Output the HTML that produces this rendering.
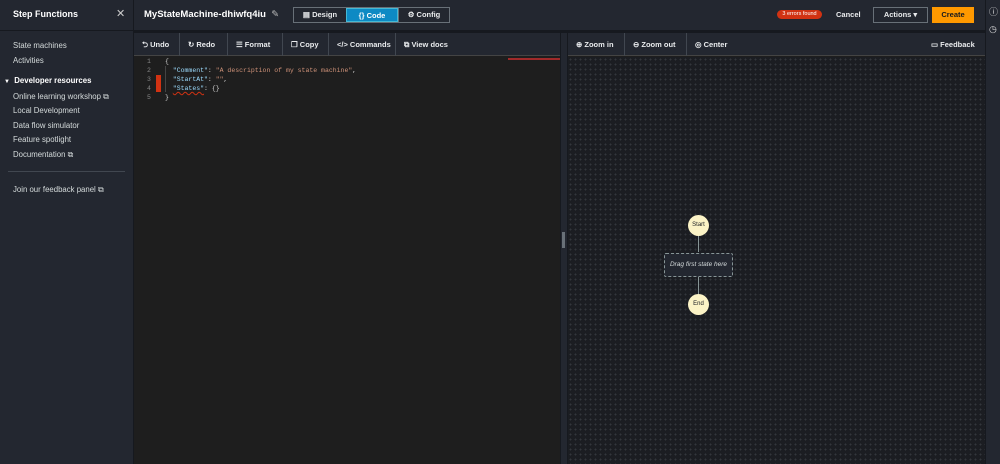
<!DOCTYPE html><html><head><style>
*{box-sizing:border-box;margin:0;padding:0}
body{width:1000px;height:464px;background:#1e1e1e;font-family:"Liberation Sans",sans-serif;color:#d5dbdb;position:relative;overflow:hidden;font-size:7.5px}
.abs{position:absolute}
#side{left:0;top:0;width:134px;height:464px;background:#232730;border-right:1px solid #16191f}
#side .it{position:absolute;left:13px;font-size:7.8px;color:#d5dbdb}
#top{left:134px;top:0;width:851px;height:30px;background:#232730}
#tb{left:134px;top:33px;width:426px;height:23px;background:#232730;border-bottom:1px solid #444}
#tb2{left:568px;top:33px;width:417px;height:23px;background:#232730;border-bottom:1px solid #444}
.btn{position:absolute;top:0;height:23px;line-height:23px;font-weight:bold;font-size:7.5px;color:#e9ebed;border-right:1px solid #414750;padding-left:8px}
#graph{left:568px;top:57px;width:417px;height:407px;background-color:#1b1d22;background-image:radial-gradient(#33363c 0.8px,transparent 1px);background-size:5px 5px}
#rail{left:985px;top:0;width:15px;height:464px;background:#232730;border-left:1px solid #16191f}
.code{font-family:"Liberation Mono",monospace;font-size:6.5px;position:absolute;white-space:pre}
.k{color:#9cdcfe}.s{color:#ce9178}
</style></head><body>
<div id="side" class="abs">
<div style="position:absolute;left:13px;top:9px;font-size:9px;font-weight:bold;color:#fff">Step Functions</div>
<div style="position:absolute;left:116px;top:7px;font-size:11px;color:#ccc">✕</div>
<div style="position:absolute;left:0;top:30px;width:134px;border-top:1px solid #16191f"></div>
<div class="it" style="top:41px">State machines</div>
<div class="it" style="top:56px">Activities</div>
<div class="it" style="top:76px;left:4px;font-weight:bold;color:#fff"><span style="font-size:6px">▼</span>&nbsp; Developer resources</div>
<div class="it" style="top:92px">Online learning workshop ⧉</div>
<div class="it" style="top:106px">Local Development</div>
<div class="it" style="top:121px">Data flow simulator</div>
<div class="it" style="top:135px">Feature spotlight</div>
<div class="it" style="top:150px">Documentation ⧉</div>
<div style="position:absolute;left:8px;top:171px;width:117px;border-top:1px solid #414750"></div>
<div class="it" style="top:185px">Join our feedback panel ⧉</div>
</div>
<div id="top" class="abs">
<div style="position:absolute;left:10px;top:9px;font-size:9.5px;font-weight:bold;color:#fff">MyStateMachine-dhiwfq4iu &nbsp;<span style="font-weight:normal;color:#bbb">✎</span></div>
<div style="position:absolute;left:159px;top:7px;width:157px;height:16px;border:1px solid #687078;display:flex;font-size:7.5px;font-weight:bold;color:#e9ebed">
<div style="width:52px;text-align:center;line-height:14px">▤ Design</div>
<div style="width:52px;text-align:center;line-height:14px;background:#0d8ac4;border:1px solid #44b9d6;color:#fff">{} Code</div>
<div style="flex:1;text-align:center;line-height:14px;border-left:1px solid #687078">⚙ Config</div></div>
<div style="position:absolute;left:643px;top:10px;width:45px;height:9px;border-radius:5px;background:#d13212;color:#fff;font-size:5.5px;text-align:center;line-height:9px">3 errors found</div>
<div style="position:absolute;left:702px;top:10px;font-weight:bold;color:#e9ebed">Cancel</div>
<div style="position:absolute;left:739px;top:7px;width:55px;height:16px;border:1px solid #687078;text-align:center;line-height:14px;font-weight:bold;color:#e9ebed">Actions ▾</div>
<div style="position:absolute;left:798px;top:7px;width:42px;height:16px;background:#ff9900;text-align:center;line-height:16px;font-weight:bold;color:#16191f">Create</div>
</div>
<div id="rail" class="abs"><div style="position:absolute;left:3px;top:5px;color:#ddd;font-size:9px">ⓘ</div><div style="position:absolute;left:3px;top:24px;color:#ddd;font-size:9px">◷</div></div>
<div id="tb" class="abs">
<div class="btn" style="left:0;width:46px">⮌ Undo</div>
<div class="btn" style="left:46px;width:48px">↻ Redo</div>
<div class="btn" style="left:94px;width:55px">☰ Format</div>
<div class="btn" style="left:149px;width:46px">❐ Copy</div>
<div class="btn" style="left:195px;width:67px">&lt;/&gt; Commands</div>
<div class="btn" style="left:262px;width:62px;border:none">⧉ View docs</div>
</div>
<div class="abs" style="left:560px;top:30px;width:8px;height:434px;background:#232730;border-left:1px solid #16191f;border-right:1px solid #16191f"></div>
<div class="abs" style="left:562px;top:232px;width:3px;height:16px;background:#687078"></div>
<div class="abs" style="left:134px;top:30px;width:851px;height:3px;background:#16191f"></div>
<div id="tb2" class="abs">
<div class="btn" style="left:0;width:57px">⊕ Zoom in</div>
<div class="btn" style="left:57px;width:62px">⊖ Zoom out</div>
<div class="btn" style="left:119px;width:50px;border:none">◎ Center</div>
<div class="btn" style="left:355px;border:none">▭ Feedback</div>
</div>
<div class="abs" style="left:508px;top:58px;width:52px;height:2px;background:#a12a2a"></div>
<div class="code" style="left:147px;top:57px;color:#858585;line-height:9px">1
2
3
4
5</div>
<div class="abs" style="left:156px;top:75px;width:5px;height:17px;background:#d13212"></div>
<div class="abs" style="left:165px;top:66px;width:1px;height:26px;background:#444"></div>
<div class="code" style="left:165px;top:57px;color:#d4d4d4;line-height:9px">{
  <span class="k">"Comment"</span>: <span class="s">"A description of my state machine"</span>,
  <span class="k">"StartAt"</span>: <span class="s">""</span>,
  <span class="k" style="text-decoration:underline wavy #d13212">"States"</span>: {}
}</div>
<div id="graph" class="abs"></div>
<div class="abs" style="left:688px;top:215px;width:21px;height:21px;border-radius:50%;background:#fbf3c6;color:#16191f;font-size:6px;text-align:center;line-height:21px">Start</div>
<div class="abs" style="left:698px;top:236px;width:1px;height:16px;background:#879596"></div>
<div class="abs" style="left:664px;top:253px;width:69px;height:24px;border:1px dashed #879596;border-radius:2px;background:#232730;color:#d5dbdb;font-size:6.5px;font-style:italic;text-align:center;line-height:22px">Drag first state here</div>
<div class="abs" style="left:698px;top:277px;width:1px;height:17px;background:#879596"></div>
<div class="abs" style="left:688px;top:294px;width:21px;height:21px;border-radius:50%;background:#fbf3c6;color:#16191f;font-size:6px;text-align:center;line-height:21px">End</div>
</body></html>
